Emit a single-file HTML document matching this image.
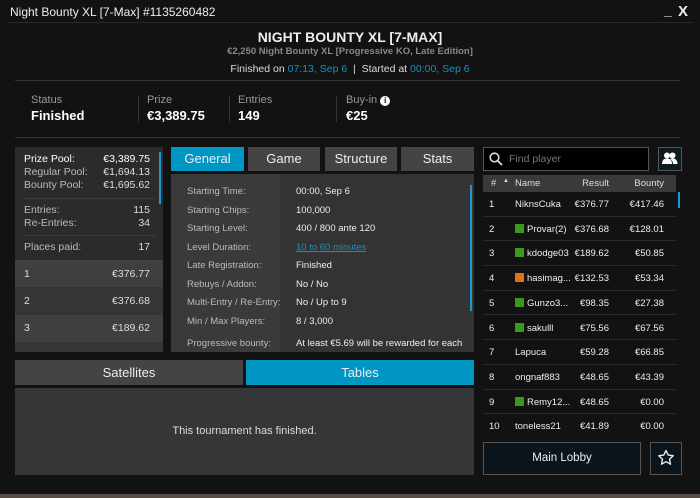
<!DOCTYPE html>
<html><head><meta charset="utf-8"><style>
*{margin:0;padding:0;box-sizing:border-box}
html,body{overflow:hidden}
body{width:700px;height:498px;background:#121212;font-family:"Liberation Sans",sans-serif;color:#eee;position:relative;overflow:hidden}
.a{position:absolute;white-space:nowrap}
.hl{position:absolute;height:1px;background:#333}
.lab{font-size:11px;color:#999}
.val{font-size:13px;font-weight:bold;color:#fff}
.vs{position:absolute;width:1px;background:#333;top:96px;height:26px}
.tab{position:absolute;top:147px;height:24px;background:#444;font-size:13px;color:#eee;text-align:center;line-height:24px}
.lr{position:absolute;left:15px;width:148px;font-size:10.5px;color:#ddd;white-space:nowrap}
.ir{position:absolute;font-size:9.5px;color:#bbb;left:16px;white-space:nowrap}
.iv{position:absolute;font-size:9.5px;color:#eee;left:125px;white-space:nowrap}
.pr{position:absolute;left:483px;width:193px;height:24.7px;border-bottom:1px solid #2c2c2c;font-size:9.5px;color:#eee}
.pr span{position:absolute;top:7px;white-space:nowrap}
.pr span.r{right:67px}
.pr span.b{right:12px}
.sq{display:inline-block;width:9px;height:9px;background:#3a9a1f;margin-right:3px;vertical-align:-1px}
</style></head><body>
<div class="a" style="left:10px;top:5px;font-size:12px;color:#eee">Night Bounty XL [7-Max] #1135260482</div>
<div class="a" style="left:664px;top:2px;font-size:14px;font-weight:bold">_</div>
<div class="a" style="left:678px;top:3px;font-size:15px;font-weight:bold">X</div>
<div class="hl" style="left:7px;top:22px;width:686px;background:#2a2a2a"></div>
<div class="a" style="left:0;width:700px;top:29px;text-align:center;font-size:14px;font-weight:bold">NIGHT BOUNTY XL [7-MAX]</div>
<div class="a" style="left:0;width:700px;top:46px;text-align:center;font-size:9.5px;font-weight:bold;color:#888">€2,250 Night Bounty XL [Progressive KO, Late Edition]</div>
<div class="a" style="left:0;width:700px;top:63px;text-align:center;font-size:10.5px;color:#ddd">Finished on <span style="color:#1a8fc0">07:13, Sep 6</span> &nbsp;| &nbsp;Started at <span style="color:#1a8fc0">00:00, Sep 6</span></div>
<div class="hl" style="left:15px;top:80px;width:665px"></div>
<div class="a lab" style="left:31px;top:94px">Status</div><div class="a val" style="left:31px;top:108px">Finished</div>
<div class="vs" style="left:138px"></div>
<div class="a lab" style="left:147px;top:94px">Prize</div><div class="a val" style="left:147px;top:108px">€3,389.75</div>
<div class="vs" style="left:229px"></div>
<div class="a lab" style="left:238px;top:94px">Entries</div><div class="a val" style="left:238px;top:108px">149</div>
<div class="vs" style="left:336px"></div>
<div class="a lab" style="left:346px;top:94px">Buy-in <span style="display:inline-block;width:10px;height:10px;border-radius:50%;background:#fff;color:#000;font-size:8px;font-weight:bold;text-align:center;line-height:10px">i</span></div><div class="a val" style="left:346px;top:108px">€25</div>
<div class="hl" style="left:15px;top:137px;width:665px"></div>

<div class="a" style="left:15px;top:147px;width:148px;height:205px;background:#2b2b2b"></div>
<div class="a" style="left:159px;top:152px;width:2px;height:52px;background:#1a9ad0"></div>
<div class="lr" style="top:153px"><span style="position:absolute;left:9px;color:#fff">Prize Pool:</span><span style="position:absolute;right:13px;color:#fff">€3,389.75</span></div>
<div class="lr" style="top:166px"><span style="position:absolute;left:9px;color:#bbb">Regular Pool:</span><span style="position:absolute;right:13px">€1,694.13</span></div>
<div class="lr" style="top:179px"><span style="position:absolute;left:9px;color:#bbb">Bounty Pool:</span><span style="position:absolute;right:13px">€1,695.62</span></div>
<div class="hl" style="left:23px;top:198px;width:132px;background:#3d3d3d"></div>
<div class="lr" style="top:204px"><span style="position:absolute;left:9px;color:#bbb">Entries:</span><span style="position:absolute;right:13px">115</span></div>
<div class="lr" style="top:217px"><span style="position:absolute;left:9px;color:#bbb">Re-Entries:</span><span style="position:absolute;right:13px">34</span></div>
<div class="hl" style="left:23px;top:235px;width:132px;background:#3d3d3d"></div>
<div class="lr" style="top:241px"><span style="position:absolute;left:9px;color:#bbb">Places paid:</span><span style="position:absolute;right:13px">17</span></div>
<div class="a" style="left:15px;top:260px;width:148px;height:27px;background:#3f3f3f"></div>
<div class="a" style="left:15px;top:287px;width:148px;height:28px;background:#353535"></div>
<div class="a" style="left:15px;top:315px;width:148px;height:27px;background:#3f3f3f"></div>
<div class="a" style="left:15px;top:342px;width:148px;height:10px;background:#353535"></div>
<div class="lr" style="top:268px"><span style="position:absolute;left:9px">1</span><span style="position:absolute;right:13px">€376.77</span></div>
<div class="lr" style="top:295px"><span style="position:absolute;left:9px">2</span><span style="position:absolute;right:13px">€376.68</span></div>
<div class="lr" style="top:322px"><span style="position:absolute;left:9px">3</span><span style="position:absolute;right:13px">€189.62</span></div>

<div class="tab" style="left:171px;width:73px;background:#0096c4">General</div>
<div class="tab" style="left:248px;width:72px">Game</div>
<div class="tab" style="left:325px;width:72px">Structure</div>
<div class="tab" style="left:401px;width:73px">Stats</div>
<div class="a" style="left:171px;top:174px;width:303px;height:178px;background:#333;overflow:hidden">
<div class="a" style="left:0;top:0;width:109px;height:178px;background:#3a3a3a"></div>
<div class="a" style="left:299px;top:11px;width:2px;height:126px;background:#1a9ad0"></div>
<div class="ir" style="top:12px">Starting Time:</div><div class="iv" style="top:12px">00:00, Sep 6</div>
<div class="ir" style="top:31px">Starting Chips:</div><div class="iv" style="top:31px">100,000</div>
<div class="ir" style="top:49px">Starting Level:</div><div class="iv" style="top:49px">400 / 800 ante 120</div>
<div class="ir" style="top:68px">Level Duration:</div><div class="iv" style="top:68px;color:#1a8fc0;text-decoration:underline">10 to 60 minutes</div>
<div class="ir" style="top:86px">Late Registration:</div><div class="iv" style="top:86px">Finished</div>
<div class="ir" style="top:105px">Rebuys / Addon:</div><div class="iv" style="top:105px">No / No</div>
<div class="ir" style="top:123px">Multi-Entry / Re-Entry:</div><div class="iv" style="top:123px">No / Up to 9</div>
<div class="ir" style="top:142px">Min / Max Players:</div><div class="iv" style="top:142px">8 / 3,000</div>
<div class="ir" style="top:164px">Progressive bounty:</div><div class="iv" style="top:164px">At least €5.69 will be rewarded for each</div>
</div>

<div class="tab" style="left:15px;top:360px;width:228px;height:25px;line-height:25px">Satellites</div>
<div class="tab" style="left:246px;top:360px;width:228px;height:25px;line-height:25px;background:#0096c4">Tables</div>
<div class="a" style="left:15px;top:388px;width:459px;height:87px;background:#363636;text-align:center;font-size:11px;line-height:87px;color:#ddd">This tournament has finished.</div>

<div class="a" style="left:483px;top:147px;width:166px;height:24px;background:#000;border:1px solid #555"></div>
<svg class="a" style="left:489px;top:152px" width="14" height="14" viewBox="0 0 14 14"><circle cx="5.5" cy="5.5" r="4.3" fill="none" stroke="#ddd" stroke-width="1.6"/><line x1="8.7" y1="8.7" x2="13" y2="13" stroke="#ddd" stroke-width="1.8"/></svg>
<div class="a" style="left:509px;top:153px;font-size:10.5px;color:#777">Find player</div>
<div class="a" style="left:658px;top:147px;width:24px;height:24px;background:#0c1a22;border:1px solid #555"></div>
<svg class="a" style="left:662px;top:152px" width="16" height="13" viewBox="0 0 16 13"><circle cx="5" cy="3.5" r="3" fill="#fff"/><path d="M0 12c0-4 2-5.5 5-5.5s5 1.5 5 5.5z" fill="#fff"/><circle cx="10.5" cy="3.5" r="3" fill="#fff"/><path d="M8 7c1-0.5 2-0.5 2.5-0.5 3 0 5 1.5 5 5.5h-4.5c0-2-1-4-3-5z" fill="#fff"/></svg>
<div class="a" style="left:483px;top:175px;width:193px;height:17px;background:#3a3a3a;font-size:9.5px;color:#ddd">
<span class="a" style="left:8px;top:3px">#</span><span class="a" style="left:20px;top:3px;font-size:6px">▲</span><span class="a" style="left:32px;top:3px">Name</span><span class="a" style="right:67px;top:3px">Result</span><span class="a" style="right:12px;top:3px">Bounty</span></div>
<div class="a" style="left:678px;top:192px;width:2px;height:16px;background:#1a9ad0"></div>
<div class="pr" style="top:192px"><span style="left:6px">1</span><span style="left:32px">NiknsCuka</span><span class="r">€376.77</span><span class="b">€417.46</span></div>
<div class="pr" style="top:216.7px"><span style="left:6px">2</span><span style="left:32px"><i class="sq"></i>Provar(2)</span><span class="r">€376.68</span><span class="b">€128.01</span></div>
<div class="pr" style="top:241.4px"><span style="left:6px">3</span><span style="left:32px"><i class="sq"></i>kdodge03</span><span class="r">€189.62</span><span class="b">€50.85</span></div>
<div class="pr" style="top:266.1px"><span style="left:6px">4</span><span style="left:32px"><i class="sq" style="background:#e07010"></i>hasimag...</span><span class="r">€132.53</span><span class="b">€53.34</span></div>
<div class="pr" style="top:290.8px"><span style="left:6px">5</span><span style="left:32px"><i class="sq"></i>Gunzo3...</span><span class="r">€98.35</span><span class="b">€27.38</span></div>
<div class="pr" style="top:315.5px"><span style="left:6px">6</span><span style="left:32px"><i class="sq"></i>sakulll</span><span class="r">€75.56</span><span class="b">€67.56</span></div>
<div class="pr" style="top:340.2px"><span style="left:6px">7</span><span style="left:32px">Lapuca</span><span class="r">€59.28</span><span class="b">€66.85</span></div>
<div class="pr" style="top:364.9px"><span style="left:6px">8</span><span style="left:32px">ongnaf883</span><span class="r">€48.65</span><span class="b">€43.39</span></div>
<div class="pr" style="top:389.6px"><span style="left:6px">9</span><span style="left:32px"><i class="sq"></i>Remy12...</span><span class="r">€48.65</span><span class="b">€0.00</span></div>
<div class="pr" style="top:414.3px;border:none"><span style="left:6px">10</span><span style="left:32px">toneless21</span><span class="r">€41.89</span><span class="b">€0.00</span></div>
<div class="a" style="left:483px;top:442px;width:158px;height:33px;background:#0a141a;border:1px solid #555;text-align:center;line-height:31px;font-size:11.5px;color:#eee">Main Lobby</div>
<div class="a" style="left:650px;top:442px;width:32px;height:33px;background:#0a141a;border:1px solid #555"></div>
<svg class="a" style="left:657px;top:449px" width="18" height="18" viewBox="0 0 18 18"><path d="M9 1.5l2.2 4.6 5 .6-3.7 3.5 1 5-4.5-2.5-4.5 2.5 1-5L1.8 6.7l5-.6z" fill="none" stroke="#eee" stroke-width="1.4" stroke-linejoin="round"/></svg>
<div class="a" style="left:0;top:494px;width:700px;height:4px;background:#5a4c44"></div>
</body></html>
